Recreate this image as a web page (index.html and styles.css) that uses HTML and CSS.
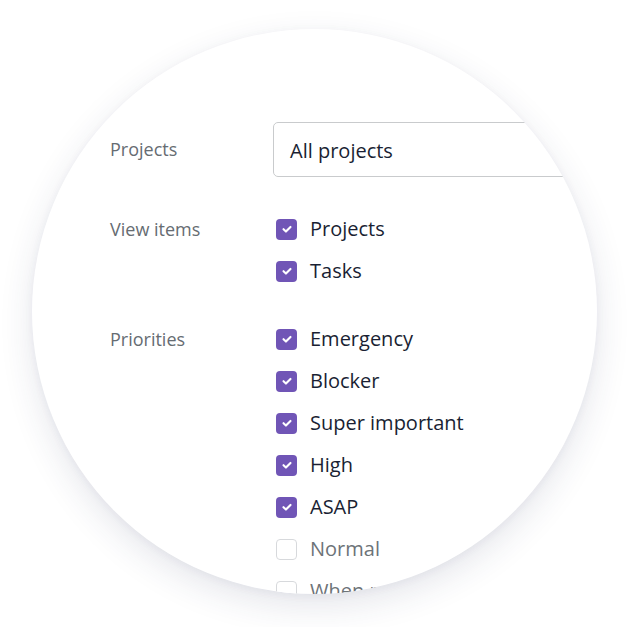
FILE: index.html
```html
<!DOCTYPE html>
<html lang="en">
<head>
<meta charset="utf-8">
<title>Filters</title>
<link rel="stylesheet" href="styles.css">
</head>
<body>
<div class="stage">
  <div class="lens">
    <form class="filters">
      <div class="label label-select">Projects</div>
      <div class="control">
        <div class="select">All projects</div>
      </div>

      <div class="label label-list">View items</div>
      <div class="control list">
        <div class="option"><span class="box checked"><svg viewBox="0 0 12 12"><path d="M3 6.2l2.1 2 3.9-4"/></svg></span><span class="text">Projects</span></div>
        <div class="option"><span class="box checked"><svg viewBox="0 0 12 12"><path d="M3 6.2l2.1 2 3.9-4"/></svg></span><span class="text">Tasks</span></div>
      </div>

      <div class="label label-list">Priorities</div>
      <div class="control list">
        <div class="option"><span class="box checked"><svg viewBox="0 0 12 12"><path d="M3 6.2l2.1 2 3.9-4"/></svg></span><span class="text">Emergency</span></div>
        <div class="option"><span class="box checked"><svg viewBox="0 0 12 12"><path d="M3 6.2l2.1 2 3.9-4"/></svg></span><span class="text">Blocker</span></div>
        <div class="option"><span class="box checked"><svg viewBox="0 0 12 12"><path d="M3 6.2l2.1 2 3.9-4"/></svg></span><span class="text">Super important</span></div>
        <div class="option"><span class="box checked"><svg viewBox="0 0 12 12"><path d="M3 6.2l2.1 2 3.9-4"/></svg></span><span class="text">High</span></div>
        <div class="option"><span class="box checked"><svg viewBox="0 0 12 12"><path d="M3 6.2l2.1 2 3.9-4"/></svg></span><span class="text">ASAP</span></div>
        <div class="option off"><span class="box"></span><span class="text">Normal</span></div>
        <div class="option off"><span class="box"></span><span class="text">When possible</span></div>
      </div>
    </form>
  </div>
</div>
</body>
</html>
```

FILE: styles.css
```css
html, body {
  margin: 0;
  padding: 0;
  background: #ffffff;
}

body {
  width: 627px;
  height: 627px;
  overflow: hidden;
  font-family: "Open Sans", "Noto Sans", sans-serif;
}

.stage {
  padding: 29px 0 0 32px;
}

.lens {
  width: 565px;
  height: 565px;
  border-radius: 50%;
  overflow: hidden;
  background: #ffffff;
  box-shadow: 0 12px 34px rgba(40, 48, 90, 0.12), 0 2px 8px rgba(40, 48, 90, 0.05);
}

.filters {
  display: grid;
  grid-template-columns: 163px 420px;
  padding: 93px 0 0 78px;
}

.label {
  font-size: 18px;
  color: #666c72;
}

.label-select {
  height: 55px;
  line-height: 55px;
}

.label-list {
  line-height: 42px;
}

.control {
  min-width: 0;
}

.select {
  box-sizing: border-box;
  height: 55px;
  width: 420px;
  border: 1px solid #c9cbcd;
  border-radius: 5px;
  padding: 2px 0 0 16px;
  line-height: 51px;
  font-size: 20px;
  color: #1a1f33;
}

.list {
  display: flex;
  flex-direction: column;
}

.filters > .label:nth-child(3),
.filters > .control:nth-child(4) {
  margin-top: 31px;
}

.filters > .label:nth-child(5),
.filters > .control:nth-child(6) {
  margin-top: 26px;
}

.option {
  display: flex;
  align-items: center;
  height: 42px;
  padding-left: 3px;
}

.box {
  box-sizing: border-box;
  width: 21px;
  height: 21px;
  border-radius: 4px;
  border: 1.5px solid #d7d9dc;
  background: #ffffff;
  display: flex;
  align-items: center;
  justify-content: center;
  flex: none;
}

.box.checked {
  border: none;
  background: #7055b6;
}

.box svg {
  width: 14px;
  height: 14px;
}

.box path {
  fill: none;
  stroke: #ffffff;
  stroke-width: 1.8;
  stroke-linecap: round;
  stroke-linejoin: round;
}

.text {
  margin-left: 13px;
  font-size: 20px;
  line-height: 42px;
  color: #1a1f33;
  white-space: nowrap;
}

.option.off .text {
  color: #6d7378;
}
```
